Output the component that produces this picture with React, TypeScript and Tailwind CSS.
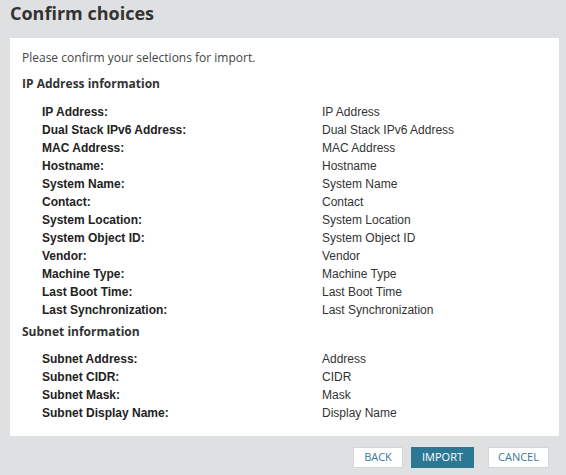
import React from "react";

const ipRows: [string, string][] = [
  ["IP Address:", "IP Address"],
  ["Dual Stack IPv6 Address:", "Dual Stack IPv6 Address"],
  ["MAC Address:", "MAC Address"],
  ["Hostname:", "Hostname"],
  ["System Name:", "System Name"],
  ["Contact:", "Contact"],
  ["System Location:", "System Location"],
  ["System Object ID:", "System Object ID"],
  ["Vendor:", "Vendor"],
  ["Machine Type:", "Machine Type"],
  ["Last Boot Time:", "Last Boot Time"],
  ["Last Synchronization:", "Last Synchronization"],
];

const subnetRows: [string, string][] = [
  ["Subnet Address:", "Address"],
  ["Subnet CIDR:", "CIDR"],
  ["Subnet Mask:", "Mask"],
  ["Subnet Display Name:", "Display Name"],
];

function Rows({ rows }: { rows: [string, string][] }) {
  return (
    <div className="flex flex-col font-['Liberation_Sans',Arial,sans-serif] text-[12px] text-[#333]">
      {rows.map(([label, value]) => (
        <div key={label} className="flex h-[18px] items-center">
          <span className="w-[300px] shrink-0 pl-[20px] font-bold text-[#222]">{label}</span>
          <span>{value}</span>
        </div>
      ))}
    </div>
  );
}

export default function App() {
  return (
    <div className="min-h-[475px] w-[566px] bg-[#dfe0e1] font-['Open_Sans',sans-serif]">
      {/* Title */}
      <h1 className="h-[38px] pl-[10px] text-[18px] font-bold leading-[26px] text-[#333]">
        Confirm choices
      </h1>

      {/* Panel */}
      <div className="ml-[10px] w-[549px] bg-white pb-[14px] pl-[12px] pt-[11px]">
        <p className="text-[12px] leading-[18px] text-[#444]">
          Please confirm your selections for import.
        </p>

        <h2 className="mt-[8px] mb-[10px] text-[12px] font-bold leading-[18px] text-[#333]">
          IP Address information
        </h2>
        <Rows rows={ipRows} />

        <h2 className="mt-[4px] mb-[9px] text-[12px] font-bold leading-[18px] text-[#333]">
          Subnet information
        </h2>
        <Rows rows={subnetRows} />
      </div>

      {/* Footer buttons */}
      <div className="mt-[11px] flex justify-end pr-[17px]">
        <button className="h-[21px] w-[50px] border border-[#d4d6d8] bg-white text-[11px] uppercase text-[#3a7896]">
          Back
        </button>
        <button className="ml-[8px] h-[21px] w-[63px] bg-[#2a7893] text-[11px] uppercase text-white">
          Import
        </button>
        <button className="ml-[14px] h-[21px] w-[61px] border border-[#d4d6d8] bg-white text-[11px] uppercase text-[#3a7896]">
          Cancel
        </button>
      </div>
    </div>
  );
}
